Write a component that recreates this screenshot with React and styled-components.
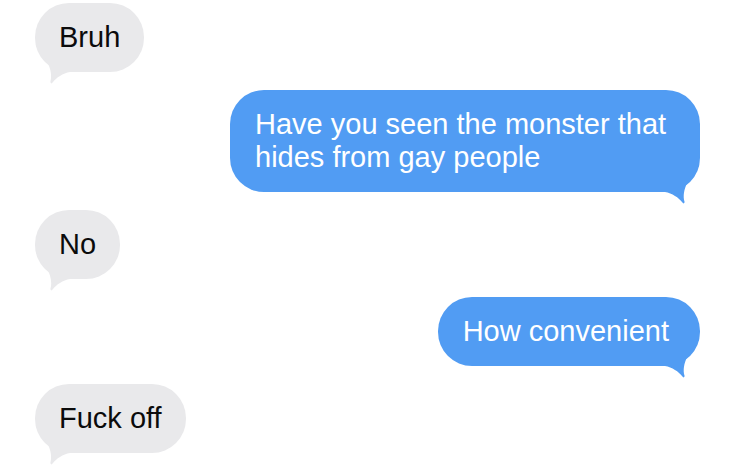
import React from 'react'
import styled, { createGlobalStyle, css } from 'styled-components'

const GlobalStyle = createGlobalStyle`
    html, body {
        margin: 0;
        padding: 0;
        background: #ffffff;
    }
    body {
        font-family: "Liberation Sans", Arial, sans-serif;
        -webkit-font-smoothing: antialiased;
    }
`

const Thread = styled.div`
    width: 735px;
    height: 468px;
    overflow: hidden;
    display: flex;
    flex-direction: column;
    gap: 18px;
    padding: 3px 35px 0;
    box-sizing: border-box;
`

const Bubble = styled.div`
    position: relative;
    max-width: 470px;
    box-sizing: border-box;
    padding: 18px 24px;
    border-radius: 34px;
    font-size: 29px;
    line-height: 33px;
    letter-spacing: 0;

    ${({ $mine }) => $mine
        ? css`
            align-self: flex-end;
            padding: 18px 31px 18px 25px;
            background: #519cf3;
            color: #ffffff;
        `
        : css`
            align-self: flex-start;
            background: #e9e9eb;
            color: #0b0b0b;
        `}
`

// keeps the words painted above the tail
const Text = styled.span`
    position: relative;
`

const TailSvg = styled.svg`
    position: absolute;
    bottom: -14px;
    width: 41px;
    height: 46px;
    ${({ $mine }) => $mine
        ? css`right: -1px;`
        : css`left: -1px; transform: scaleX(-1);`}
`

const Tail = ({ mine }) => (
    <TailSvg $mine={mine} viewBox="0 0 41 46">
        <path
            d="M0 0 L0 32 L5 32 C12 33 19 38 22 42 Q24 44.8 24.6 42 C21 30 30 16 39 6 L39 0 Z"
            fill={mine ? '#519cf3' : '#e9e9eb'}
        />
    </TailSvg>
)

const messages = [
    { text: 'Bruh', mine: false },
    { text: 'Have you seen the monster that hides from gay people', mine: true },
    { text: 'No', mine: false },
    { text: 'How convenient', mine: true },
    { text: 'Fuck off', mine: false },
]

const App = () => {
    return (
        <>
            <GlobalStyle />
            <Thread>
                {messages.map((m, i) => (
                    <Bubble key={i} $mine={m.mine}>
                        <Tail mine={m.mine} />
                        <Text>{m.text}</Text>
                    </Bubble>
                ))}
            </Thread>
        </>
    )
}

export default App
